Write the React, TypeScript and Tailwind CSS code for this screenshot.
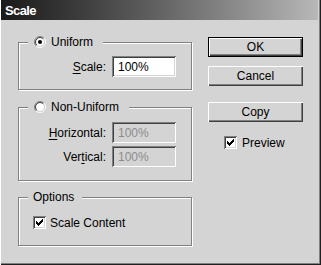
import React from "react";

const sunken =
  "shadow-[inset_1px_1px_0_#808080,inset_-1px_-1px_0_#ffffff,inset_2px_2px_0_#404040,inset_-2px_-2px_0_#d4d4d4]";
const etched =
  "border border-[#808080] shadow-[inset_1px_1px_0_#ffffff,1px_1px_0_#ffffff]";
const raised =
  "shadow-[inset_1px_1px_0_#ffffff,inset_-1px_-1px_0_#404040,inset_-2px_-2px_0_#808080]";

function Radio({ checked }: { checked?: boolean }) {
  return (
    <svg width="12" height="12" viewBox="0 0 12 12" className="shrink-0">
      <circle cx="6" cy="6" r="4" fill="#fff" />
      <path d="M2.111 9.889A5.5 5.5 0 0 1 9.889 2.111" stroke="#808080" fill="none" />
      <path d="M9.889 2.111A5.5 5.5 0 0 1 2.111 9.889" stroke="#ffffff" fill="none" />
      <path d="M2.818 9.182A4.5 4.5 0 0 1 9.182 2.818" stroke="#404040" fill="none" />
      <path d="M9.182 2.818A4.5 4.5 0 0 1 2.818 9.182" stroke="#d4d4d4" fill="none" />
      {checked && <circle cx="6" cy="6" r="2" fill="#000" />}
    </svg>
  );
}

function Checkbox() {
  const ys = [3, 4, 5, 4, 3, 2, 1];
  return (
    <div className={`relative w-[13px] h-[13px] shrink-0 bg-white ${sunken}`}>
      <svg width="13" height="13" viewBox="0 0 13 13" className="block">
        {ys.map((y, i) => (
          <rect key={i} x={i + 3} y={y + 2} width="1" height="3" fill="#000" />
        ))}
      </svg>
    </div>
  );
}

function Field({ value, disabled }: { value: string; disabled?: boolean }) {
  return (
    <div
      className={`w-[64px] h-[21px] flex items-center pl-[6px] ${sunken} ${
        disabled ? "bg-[#d4d4d4] text-[#8c8c8c]" : "bg-white text-black"
      }`}
    >
      {value}
    </div>
  );
}

function Btn({ label, def }: { label: string; def?: boolean }) {
  return (
    <div
      className={`w-[95px] h-[20px] flex items-center justify-center text-black ${raised} ${
        def ? "border border-black" : ""
      }`}
    >
      {label}
    </div>
  );
}

export default function App() {
  return (
    <div className="w-[321px] h-[265px] bg-[#d4d4d4] font-['Liberation_Sans',Arial,sans-serif] text-[12px] text-black leading-none flex flex-col shadow-[inset_1px_0_0_#ffffff,inset_-1px_-1px_0_#202020,inset_-2px_-2px_0_#808080] overflow-hidden">
      <div className="h-[20px] ml-[1px] mr-[3px] flex items-center pl-[4px] bg-gradient-to-r from-[#1a1a1a] to-[#b8b8b8]">
        <span className="text-white font-bold text-[13px] tracking-[-0.6px]">Scale</span>
      </div>
      <div className="flex items-start pl-[18px] pt-[15px]">
        {/* left column */}
        <div className="w-[174px] flex flex-col">
          {/* Uniform */}
          <div className="relative z-10 h-[14px] mb-[-7px] flex items-center pl-[10px]">
            <div className="h-[14px] flex items-center gap-[5px] bg-[#d4d4d4] pl-[6px] pr-[10px]">
              <Radio checked />
              <span>Uniform</span>
            </div>
          </div>
          <div className={`h-[48px] ${etched} pt-[13px]`}>
            <div className="flex items-center gap-[6px]">
              <div className="w-[87px] text-right">
                <span className="underline underline-offset-[2px]">S</span>cale:
              </div>
              <Field value="100%" />
            </div>
          </div>

          {/* Non-Uniform */}
          <div className="relative z-10 h-[14px] mb-[-7px] mt-[10px] flex items-center pl-[10px]">
            <div className="h-[14px] flex items-center gap-[5px] bg-[#d4d4d4] pl-[6px] pr-[10px]">
              <Radio />
              <span>Non-Uniform</span>
            </div>
          </div>
          <div className={`h-[74px] ${etched} pt-[14px] flex flex-col gap-[3px]`}>
            <div className="flex items-center gap-[6px]">
              <div className="w-[87px] text-right">
                <span className="underline underline-offset-[2px]">H</span>orizontal:
              </div>
              <Field value="100%" disabled />
            </div>
            <div className="flex items-center gap-[6px]">
              <div className="w-[87px] text-right">
                Ver<span className="underline underline-offset-[2px]">t</span>ical:
              </div>
              <Field value="100%" disabled />
            </div>
          </div>

          {/* Options */}
          <div className="relative z-10 h-[14px] mb-[-7px] mt-[9px] flex items-center pl-[10px]">
            <div className="h-[14px] flex items-center bg-[#d4d4d4] pl-[5px] pr-[8px]">
              <span>Options</span>
            </div>
          </div>
          <div className={`h-[49px] ${etched} pt-[18px] pl-[14px]`}>
            <div className="flex items-center gap-[4px]">
              <Checkbox />
              <span>Scale Content</span>
            </div>
          </div>
        </div>

        {/* right column */}
        <div className="ml-[16px] pt-[2px] flex flex-col">
          <Btn label="OK" def />
          <div className="mt-[9px]">
            <Btn label="Cancel" />
          </div>
          <div className="mt-[16px]">
            <Btn label="Copy" />
          </div>
          <div className="mt-[14px] pl-[16px] flex items-center gap-[5px]">
            <Checkbox />
            <span>Preview</span>
          </div>
        </div>
      </div>
    </div>
  );
}
